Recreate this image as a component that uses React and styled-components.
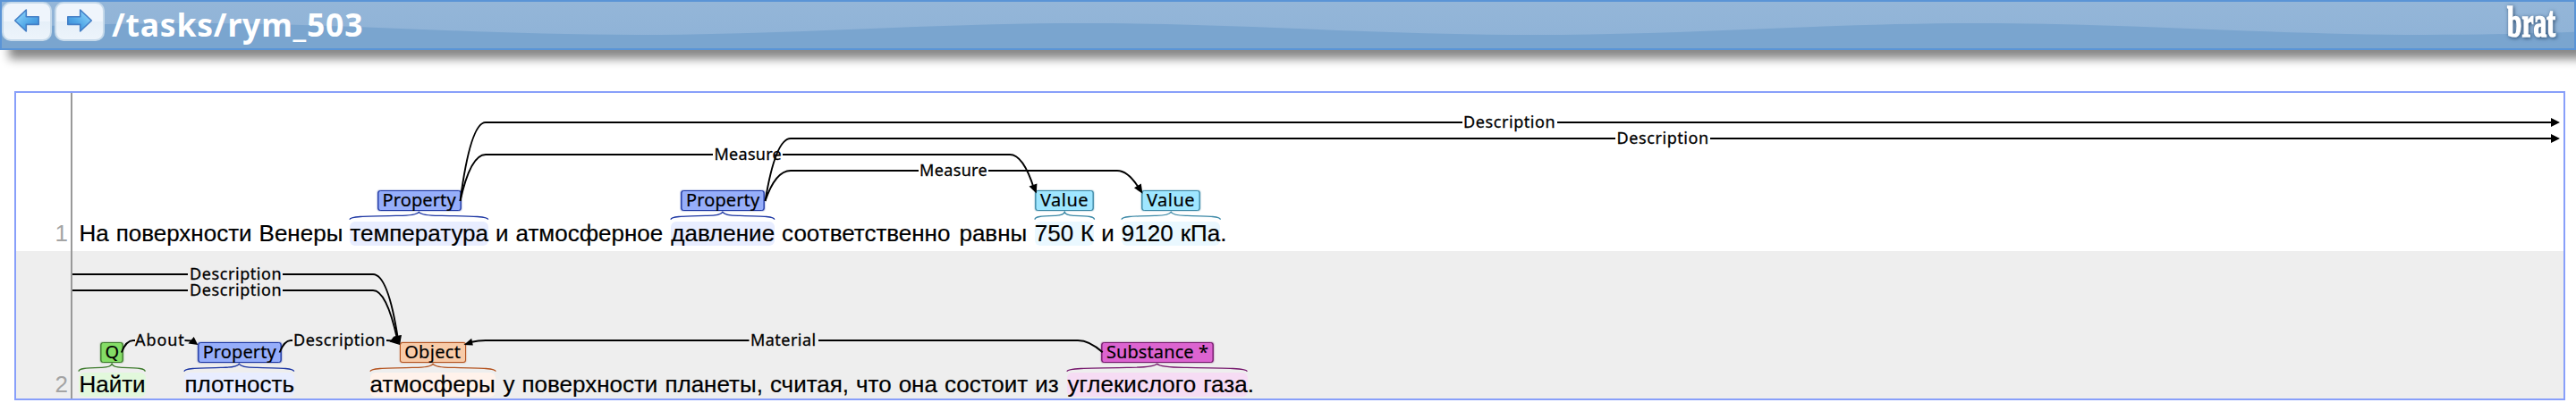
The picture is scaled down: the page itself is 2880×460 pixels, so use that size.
import React from 'react';
import styled, { createGlobalStyle } from 'styled-components';

const GlobalStyle = createGlobalStyle`
  body {
    margin: 0;
    background: #fff;
    overflow: hidden;
  }
`;

const KINDS = {
  property: { fill: '#96aefa', line: '#1c36a3', tint: '#e8edff' },
  value: { fill: '#9fe6ff', line: '#3b88a6', tint: '#eaf8ff' },
  question: { fill: '#84dd66', line: '#3c7a2b', tint: '#e2f8dc' },
  object: { fill: '#f8cba8', line: '#b4531f', tint: '#fff2eb' },
  substance: { fill: '#dc64d0', line: '#75176c', tint: '#f6dcf4' },
};

const Page = styled.div`
  width: 2880px;
  height: 460px;
`;

const Header = styled.header`
  position: relative;
  box-sizing: border-box;
  display: flex;
  align-items: flex-start;
  height: 56px;
  border: 2px solid #5a94d6;
  background: linear-gradient(#94b6d8, #8eb2d7);
  box-shadow: 10px 10px 10px #888;
`;

const Wave = styled.svg`
  position: absolute;
  inset: 0;
  width: 100%;
  height: 100%;
`;

const NavButton = styled.button`
  position: relative;
  box-sizing: border-box;
  width: 56px;
  height: 44px;
  margin: 0 3px 0 0;
  padding: 0;
  border: 2px solid #c5d9ea;
  border-radius: 10px;
  background: linear-gradient(#eff5fc 0 50%, #e5eff8 50%, #edf4fb 100%);

  svg {
    display: block;
    width: 52px;
    height: 40px;
    transform: ${(p) => (p.$forward ? 'scaleX(-1)' : 'none')};
  }
`;

const DocumentPath = styled.h1`
  position: relative;
  margin: 0 0 0 5px;
  font: bold 35.5px/50px 'Noto Sans', 'Open Sans', sans-serif;
  letter-spacing: 0.8px;
  color: #fff;
`;

const Logo = styled.svg`
  position: relative;
  width: 86px;
  height: 52px;
  margin-left: auto;
  filter: drop-shadow(1px 1px 2px rgba(20, 50, 85, 0.8));

  text {
    font: bold 48px 'Liberation Serif', serif;
    fill: #fff;
    stroke: #fff;
    stroke-width: 1.6px;
  }
`;

const Panel = styled.main`
  box-sizing: border-box;
  width: 2852px;
  margin: 46px 0 0 16px;
  border: 2px solid #889ffa;
`;

const Row = styled.section`
  display: grid;
  grid-template-columns: 63px 1fr;
  height: ${(p) => p.$height}px;
  background: ${(p) => (p.$shaded ? '#eee' : '#fff')};
`;

const Gutter = styled.div`
  display: flex;
  align-items: flex-end;
  justify-content: flex-end;
  padding: 0 3px ${(p) => p.$bottom}px 0;
  border-right: 2px solid #999;
  font: 26px/27px 'Liberation Sans', Arial, sans-serif;
  color: #a4a4a4;
`;

const Diagram = styled.div`
  position: relative;
  display: flex;
  align-items: flex-end;
  padding: 0 0 ${(p) => p.$bottom}px 7.4px;
`;

const Words = styled.span`
  margin-left: ${(p) => p.$gap}px;
  font: 26px/27px 'Liberation Sans', Arial, sans-serif;
  word-spacing: 0.78px;
  white-space: pre;
  color: #000;
  -webkit-text-stroke: 0.2px #000;
`;

const MentionText = styled(Words)`
  position: relative;
  border-radius: 6px;
  background: ${(p) => KINDS[p.$kind].tint};
`;

const Tag = styled.span`
  position: absolute;
  left: 50%;
  top: -${(p) => p.$lift}px;
  box-sizing: border-box;
  width: ${(p) => p.$width}px;
  height: 23px;
  transform: translateX(-50%);
  border: 1px solid ${(p) => KINDS[p.$kind].line};
  border-radius: 3px;
  background: ${(p) => KINDS[p.$kind].fill};
  box-shadow: 0 0 1.5px ${(p) => KINDS[p.$kind].line};
  font: 20px/19px 'Noto Sans', 'Open Sans', sans-serif;
  letter-spacing: ${(p) => p.$tracking}px;
  word-spacing: 0;
  text-align: center;
`;

const Brace = styled.svg`
  position: absolute;
  left: 0;
  top: -${(p) => p.$lift}px;
  width: 100%;
  height: 10px;
  overflow: visible;

  path {
    fill: none;
    stroke: ${(p) => KINDS[p.$kind].line};
    stroke-width: 1.3;
    vector-effect: non-scaling-stroke;
  }
`;

const Arcs = styled.svg`
  position: absolute;
  inset: 0;
  width: 100%;
  height: 100%;

  path {
    fill: none;
    stroke: #000;
    stroke-width: 1.9;
  }

  polygon {
    fill: #000;
  }

  text {
    font: 18px 'Noto Sans', 'Open Sans', sans-serif;
    fill: #000;
    stroke: #000;
    stroke-width: 0.3px;
  }
`;

function Mention({ kind, tag, width, gap = 8, lift = 35, tracking = 0.1, children }) {
  return (
    <MentionText $kind={kind} $gap={gap}>
      {children}
      <Brace $kind={kind} $lift={lift - 24} viewBox="0 0 100 10" preserveAspectRatio="none">
        <path d="M0 8.8 C0 5.2 10 5 35 4.3 Q48 4.2 50 0.3 Q52 4.2 65 4.3 C90 5 100 5.2 100 8.8" />
      </Brace>
      <Tag $kind={kind} $width={width} $lift={lift} $tracking={tracking}>{tag}</Tag>
    </MentionText>
  );
}

function Arc({ label, x, width, y, before, after, head }) {
  return (
    <g>
      <path d={before} />
      <path d={after} />
      {head && <polygon points={head} />}
      <text x={x - 1} y={y + 6} textLength={width + 2.2}>{label}</text>
    </g>
  );
}

const WAVE =
  'M-290 37 C-110 37 30 24 210 24 S530 37 710 37 S1030 24 1210 24 S1530 37 1710 37 S2030 24 2210 24 S2530 37 2710 37 S3030 24 3210 24 V60 H-290 Z';

function ArrowIcon() {
  return (
    <svg viewBox="0 0 52 40">
      <defs>
        <linearGradient id="arrowFill" x1="0" y1="0" x2="1" y2="1">
          <stop offset="0.1" stopColor="#8fd6fb" />
          <stop offset="0.6" stopColor="#4ea5e6" />
          <stop offset="1" stopColor="#3585d0" />
        </linearGradient>
      </defs>
      <path
        d="M12.7 19 L25.3 7 V14.7 H39.2 V23.4 H25.3 V31 Z"
        fill="url(#arrowFill)"
        stroke="#447fc6"
        strokeWidth="1.6"
        strokeLinejoin="round"
      />
    </svg>
  );
}

export default function App() {
  return (
    <Page>
      <GlobalStyle />
      <Header>
        <Wave viewBox="0 0 2876 52" preserveAspectRatio="none">
          <path d={WAVE} fill="#7aa5cf" />
        </Wave>
        <NavButton aria-label="Previous"><ArrowIcon /></NavButton>
        <NavButton aria-label="Next" $forward><ArrowIcon /></NavButton>
        <DocumentPath>/tasks/rym_503</DocumentPath>
        <Logo viewBox="0 0 86 52">
          <text x="11" y="39" textLength="54" lengthAdjust="spacingAndGlyphs">brat</text>
        </Logo>
      </Header>

      <Panel>
        <Row $height={177}>
          <Gutter $bottom={6}>1</Gutter>
          <Diagram $bottom={6}>
            <Words $gap={0}>На поверхности Венеры</Words>
            <Mention kind="property" tag="Property" width={93}>температура</Mention>
            <Words $gap={8}>и атмосферное</Words>
            <Mention kind="property" tag="Property" width={93} gap={9}>давление</Mention>
            <Words $gap={8}>соответственно</Words>
            <Words $gap={10}>равны</Words>
            <Mention kind="value" tag="Value" width={65} tracking={0.5} gap={8.5}>750 К</Mention>
            <Words $gap={8}>и</Words>
            <Mention kind="value" tag="Value" width={65} tracking={0.5}>9120 кПа</Mention>
            <Words $gap={0}>.</Words>
            <Arcs viewBox="81 104 2785 177">
              <Arc label="Description" x={1637} width={100.5} y={137}
                before="M514.5 225 Q526 137 543 137 H1635" after="M1741 137 H2854"
                head="2852,132 2862,137 2852,142" />
              <Arc label="Measure" x={799.5} width={73} y={173}
                before="M514.5 225 Q526 173 543 173 H797" after="M875 173 H1129 Q1144 173 1156 211"
                head="1150.5,208.4 1159.4,205.6 1158.7,216.5" />
              <Arc label="Description" x={1808.5} width={100.5} y={155}
                before="M855.5 225 Q867 155 884 155 H1806" after="M1912 155 H2854"
                head="2852,150 2862,155 2852,160" />
              <Arc label="Measure" x={1029} width={73.5} y={191}
                before="M855.5 225 Q867 191 884 191 H1027" after="M1105 191 H1249 Q1261 191 1273 210"
                head="1268,210.3 1275.8,205.5 1277.4,216.7" />
            </Arcs>
          </Diagram>
        </Row>

        <Row $height={165} $shaded>
          <Gutter $bottom={2}>2</Gutter>
          <Diagram $bottom={2}>
            <Mention kind="question" tag="Q" width={25} gap={0} lift={34}>Найти</Mention>
            <Mention kind="property" tag="Property" width={93} gap={43.8} lift={34}>плотность</Mention>
            <Mention kind="object" tag="Object" width={74} gap={84.6} lift={34} tracking={0.3}>атмосферы</Mention>
            <Words $gap={8.7}>у поверхности планеты,</Words>
            <Words $gap={8}>считая, что она состоит из</Words>
            <Mention kind="substance" tag="Substance *" width={125} gap={9.8} lift={34}>углекислого газа</Mention>
            <Words $gap={0}>.</Words>
            <Arcs viewBox="81 281 2785 165">
              <Arc label="Description" x={213} width={100.5} y={307}
                before="M81 307 H210" after="M316 307 H417 Q434 307 445 380"
                head="440.5,376.5 449,375 447,386" />
              <Arc label="Description" x={213} width={100.5} y={325}
                before="M81 325 H210" after="M316 325 H417 Q432 325 444 379"
                head="439,378 447.5,375.5 447,386" />
              <Arc label="About" x={152} width={52.5} y={381}
                before="M135.8 394.5 Q141 381 149 381 H151" after="M206.5 381 Q210 381 214 381.5"
                head="210.5,384.4 216.7,377 221.3,386" />
              <Arc label="Description" x={329} width={100.5} y={381}
                before="M312.5 394.5 Q318 381 325 381 H327" after="M432 381 Q436 381 440 382"
                head="435.5,382.5 440.5,376.5 447,386" />
              <Arc label="Material" x={840} width={71} y={381}
                before="M526 383 Q535 381 543 381 H837.5" after="M915 381 H1205 Q1218 381 1232.7 394.3"
                head="527.2,378.8 528.8,386.6 518.5,386" />
            </Arcs>
          </Diagram>
        </Row>
      </Panel>
    </Page>
  );
}
